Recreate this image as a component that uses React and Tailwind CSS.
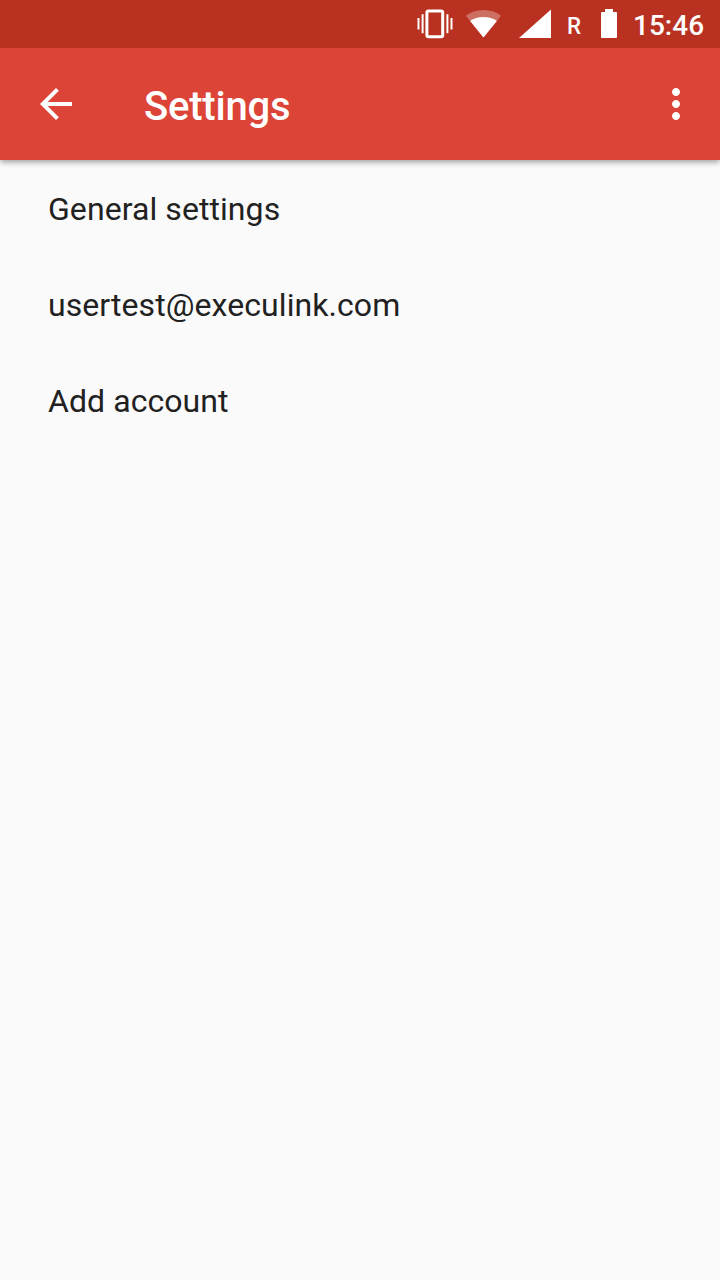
import React from "react";

const settingsItems = ["General settings", "usertest@execulink.com", "Add account"];

const VibrateIcon = () => (
  <svg className="w-9 h-12 shrink-0" viewBox="0 0 36 48" fill="none">
    <rect x="9.900" y="11" width="15.800" height="25.700" rx="1.500" stroke="white" strokeWidth="3" />
    <path
      d="M0.5 18h2v11.5h-2zM4.6 14.3h2v19h-2zM29.4 14.3h2v19h-2zM33.5 18h2v11.5h-2z"
      fill="white"
    />
  </svg>
);

const WifiIcon = () => (
  <svg className="w-9 h-12 shrink-0" viewBox="0 0 36 48" fill="white">
    <path d="M18.500 37.500 0.900 15.800C5.700 12.100 11.700 10 18.500 10s12.800 2.100 17.500 5.800z" opacity="0.3" />
    <path d="M18.500 37.500 5.100 21C8.700 18.400 13.200 17 18.500 17s9.800 1.400 13.400 4z" />
  </svg>
);

const SignalIcon = () => (
  <svg className="w-8 h-12 shrink-0" viewBox="0 0 32 48" fill="white">
    <path d="M0 38 32 9.500V38z" />
  </svg>
);

const BatteryIcon = () => (
  <svg className="w-4 h-12 shrink-0" viewBox="0 0 16 48" fill="white">
    <path d="M4 9h8v3h3a1 1 0 0 1 1 1v24a1 1 0 0 1-1 1H1a1 1 0 0 1-1-1V13a1 1 0 0 1 1-1h3z" />
  </svg>
);

const StatusBar = () => (
  <div className="relative z-10 h-12 bg-[#b93221] flex items-center justify-end pr-4 text-white">
    <VibrateIcon />
    <div className="ml-3 flex">
      <WifiIcon />
    </div>
    <div className="ml-[18px] flex">
      <SignalIcon />
    </div>
    <span className="ml-4 w-[34px] pt-1 text-2xl leading-6">
      <span className="inline-block origin-left scale-x-93 font-medium">R</span>
    </span>
    <BatteryIcon />
    <span className="ml-4 w-[71px] pt-1 text-[28px] leading-8 font-medium">15:46</span>
  </div>
);

const AppBar = () => (
  <header className="relative h-28 bg-[#dc4437] flex items-center px-8 text-white shadow-[0_2px_6px_rgba(0,0,0,0.38)]">
    <button aria-label="Back">
      <svg className="size-12" viewBox="0 0 24 24" fill="currentColor">
        <path d="M20 11H7.830l5.590-5.590L12 4l-8 8 8 8 1.410-1.410L7.830 13H20v-2z" />
      </svg>
    </button>
    <h1 className="ml-16 pt-1.5 text-[40px] leading-12 font-medium tracking-[-0.2px]">Settings</h1>
    <button aria-label="More options" className="ml-auto -mr-3">
      <svg className="size-12" viewBox="0 0 24 24" fill="currentColor">
        <path d="M12 8c1.100 0 2-.9 2-2s-.9-2-2-2-2 .9-2 2 .9 2 2 2zm0 2c-1.100 0-2 .9-2 2s.9 2 2 2 2-.9 2-2-.9-2-2-2zm0 6c-1.100 0-2 .9-2 2s.9 2 2 2 2-.9 2-2-.9-2-2-2z" />
      </svg>
    </button>
  </header>
);

const App = () => {
  return (
    <div className="min-h-screen bg-[#fafafa] font-[Roboto,sans-serif] flex flex-col">
      <StatusBar />
      <AppBar />
      <ul>
        {settingsItems.map((item) => (
          <li
            key={item}
            className="h-24 px-12 pt-0.5 flex items-center text-[32px] leading-10 tracking-[0.07px] text-[#212121]"
          >
            {item}
          </li>
        ))}
      </ul>
    </div>
  );
};

export default App;
